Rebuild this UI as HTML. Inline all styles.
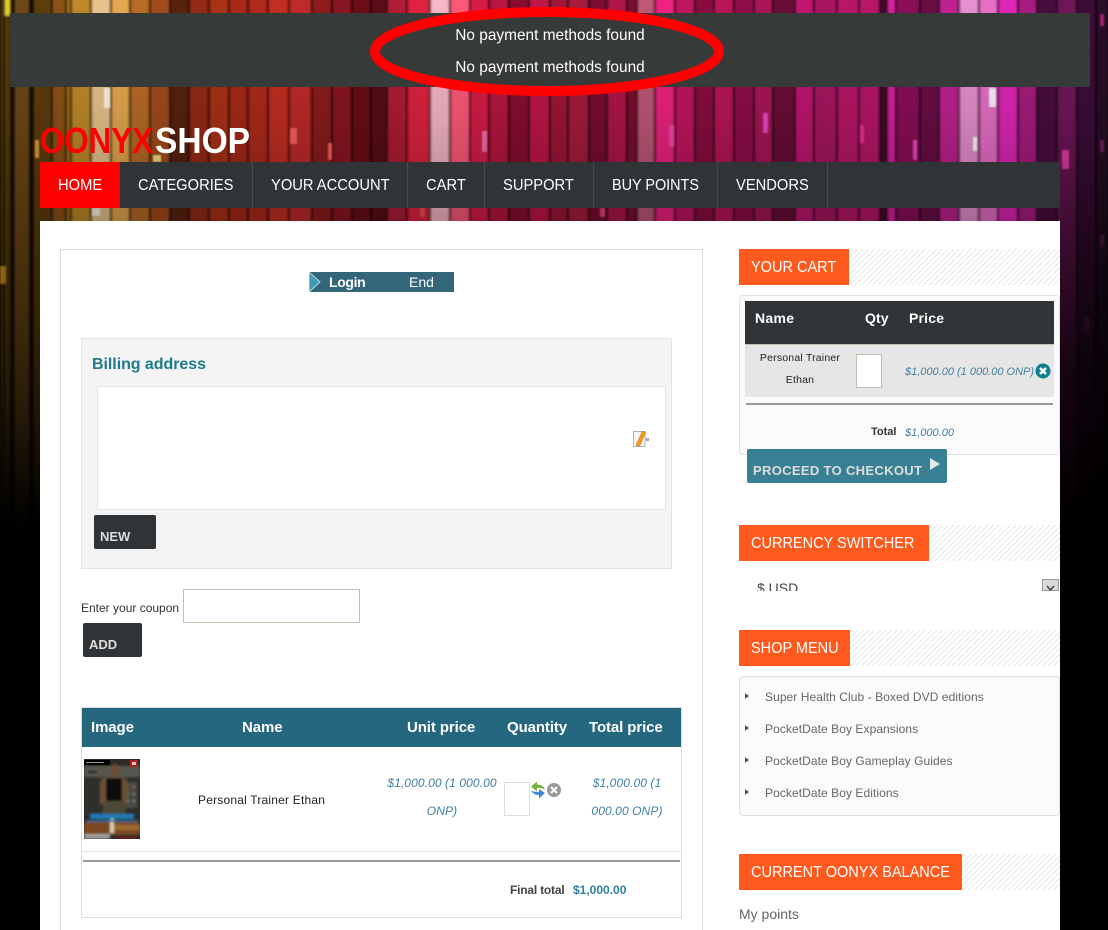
<!DOCTYPE html>
<html lang="en">
<head>
<meta charset="utf-8">
<title>Oonyx Shop</title>
<style>
html,body{margin:0;padding:0;width:1108px;height:930px;overflow:hidden;background:#000}
body{position:relative;font-family:"Liberation Sans",Arial,sans-serif}
div,a,span.t,svg.a,input{position:absolute}
.t{position:absolute;white-space:nowrap}
.bar{left:10px;top:13px;width:1080px;height:74px;background:#363a39}
.msg{left:10px;width:1080px;text-align:center;color:#fff;font-size:16px;line-height:20px;transform:scaleX(.964)}
.nav{left:40px;top:162px;width:1020px;height:46px;background:#303436}
.nt{top:162px;line-height:48px;font-size:16px;color:#fff;transform:scaleX(.92);transform-origin:0 50%}
.sep{top:162px;width:1px;height:46px;background:#474b4d}
.hatch{left:739px;width:321px;height:36px;background:repeating-linear-gradient(-45deg,#e8e8e8 0 1px,#fff 1px 4px)}
.hd{left:739px;height:36px;background:#ff5a1e;color:#fff;font-size:16px;line-height:37px;white-space:nowrap}
.hd span{left:12px;top:0;transform:scaleX(.907);transform-origin:0 50%}
.box{background:#fbfbfb;background-image:repeating-conic-gradient(#f8f8f8 0 25%,#fdfdfd 0 50%);background-size:4px 4px;border:1px solid #e0e0e0;border-radius:4px;box-sizing:border-box}
.btn{background:#303436;border-radius:2px;color:#ddd;font-weight:bold;font-size:13px;box-sizing:border-box}
.th{color:#fff;font-weight:bold;font-size:15px;line-height:20px;top:718px;letter-spacing:-.1px}
.price{color:#3f7f9f;font-style:italic;font-size:12px;line-height:28px;text-align:center;letter-spacing:.1px}
.mi{left:765px;font-size:12px;color:#666;line-height:16px;letter-spacing:.07px}
.bul{left:745px;width:0;height:0;border-left:4px solid #555;border-top:3px solid transparent;border-bottom:3px solid transparent}
</style>
</head>
<body>

<svg class="a" style="left:0;top:0" width="1108" height="560" viewBox="0 0 1108 560">
<defs>
<linearGradient id="fade" x1="0" y1="0" x2="0" y2="1">
<stop offset="0" stop-color="#000" stop-opacity="0"/>
<stop offset=".2" stop-color="#000" stop-opacity=".1"/>
<stop offset=".37" stop-color="#000" stop-opacity=".25"/>
<stop offset=".55" stop-color="#000" stop-opacity=".42"/>
<stop offset=".72" stop-color="#000" stop-opacity=".62"/>
<stop offset=".86" stop-color="#000" stop-opacity=".87"/>
<stop offset=".95" stop-color="#000" stop-opacity="1"/>
<stop offset="1" stop-color="#000" stop-opacity="1"/>
</linearGradient>
<linearGradient id="rf" x1="0" y1="0" x2="0" y2="1">
<stop offset="0" stop-color="#000" stop-opacity="0"/>
<stop offset="1" stop-color="#000" stop-opacity=".55"/>
</linearGradient>
<filter id="b" x="0" y="0" width="100%" height="100%"><feGaussianBlur stdDeviation="1"/></filter>
<filter id="b2" x="-50%" y="-50%" width="200%" height="200%"><feGaussianBlur stdDeviation=".7"/></filter>
</defs>
<g filter="url(#b)" stroke="#000" stroke-opacity=".6" stroke-width="2.2">
<rect x="0" y="-5" width="4" height="570" fill="#5e400e"/>
<rect x="4" y="-5" width="7" height="22" fill="#e8d030"/>
<rect x="4" y="17" width="7" height="550" fill="#5a3c0e"/>
<rect x="11" y="-5" width="3" height="570" fill="#2a1c06"/>
<rect x="14" y="-5" width="16" height="570" fill="#6e4a12"/>
<rect x="30" y="-5" width="3" height="570" fill="#1e1204"/>
<rect x="33" y="-5" width="19" height="570" fill="#5e3c0e"/>
<rect x="52" y="-5" width="14" height="570" fill="#8e5214"/>
<rect x="66" y="-5" width="5" height="570" fill="#a87420"/>
<rect x="71" y="-5" width="20" height="570" fill="#c08a2a"/>
<rect x="91" y="-5" width="20" height="570" fill="#e8c48c"/>
<rect x="111" y="-5" width="19" height="570" fill="#e6a850"/>
<rect x="130" y="-5" width="20" height="570" fill="#b86c28"/>
<rect x="150" y="-5" width="20" height="570" fill="#a44c1c"/>
<rect x="170" y="-5" width="19" height="570" fill="#5a2410"/>
<rect x="189" y="-5" width="20" height="570" fill="#962c14"/>
<rect x="209" y="-5" width="20" height="570" fill="#aa3018"/>
<rect x="229" y="-5" width="19" height="570" fill="#a82a18"/>
<rect x="248" y="-5" width="20" height="570" fill="#b02a1c"/>
<rect x="268" y="-5" width="21" height="570" fill="#c42e24"/>
<rect x="289" y="-5" width="23" height="570" fill="#c02c2a"/>
<rect x="312" y="-5" width="20" height="570" fill="#8e1c1c"/>
<rect x="332" y="-5" width="20" height="570" fill="#8a1820"/>
<rect x="352" y="-5" width="19" height="570" fill="#6a1018"/>
<rect x="371" y="-5" width="16" height="570" fill="#5a0c18"/>
<rect x="387" y="-5" width="20" height="570" fill="#b01c34"/>
<rect x="407" y="-5" width="23" height="570" fill="#e02040"/>
<rect x="430" y="-5" width="20" height="570" fill="#f8b8c8"/>
<rect x="450" y="-5" width="20" height="570" fill="#ff5a78"/>
<rect x="470" y="-5" width="19" height="570" fill="#d81c48"/>
<rect x="489" y="-5" width="20" height="570" fill="#b81440"/>
<rect x="509" y="-5" width="20" height="570" fill="#8a1030"/>
<rect x="529" y="-5" width="21" height="570" fill="#c01848"/>
<rect x="550" y="-5" width="18" height="570" fill="#a01838"/>
<rect x="568" y="-5" width="21" height="570" fill="#a81a3c"/>
<rect x="589" y="-5" width="18" height="570" fill="#7a1030"/>
<rect x="607" y="-5" width="20" height="570" fill="#b01848"/>
<rect x="627" y="-5" width="10" height="570" fill="#801030"/>
<rect x="637" y="-5" width="18" height="570" fill="#c05878"/>
<rect x="655" y="-5" width="20" height="570" fill="#f02080"/>
<rect x="675" y="-5" width="20" height="570" fill="#c01860"/>
<rect x="695" y="-5" width="19" height="570" fill="#8a1040"/>
<rect x="714" y="-5" width="20" height="570" fill="#b81858"/>
<rect x="734" y="-5" width="20" height="570" fill="#901048"/>
<rect x="754" y="-5" width="19" height="570" fill="#a81858"/>
<rect x="773" y="-5" width="22" height="570" fill="#6a0c38"/>
<rect x="795" y="-5" width="19" height="570" fill="#c01870"/>
<rect x="814" y="-5" width="23" height="570" fill="#a81460"/>
<rect x="837" y="-5" width="22" height="570" fill="#b81868"/>
<rect x="859" y="-5" width="21" height="570" fill="#b81868"/>
<rect x="880" y="-5" width="7" height="570" fill="#400a28"/>
<rect x="887" y="-5" width="9" height="570" fill="#d8209c"/>
<rect x="896" y="-5" width="24" height="570" fill="#8a1058"/>
<rect x="920" y="-5" width="19" height="570" fill="#6a0c44"/>
<rect x="939" y="-5" width="20" height="570" fill="#c02090"/>
<rect x="959" y="-5" width="20" height="570" fill="#e890d0"/>
<rect x="979" y="-5" width="19" height="570" fill="#e870c8"/>
<rect x="998" y="-5" width="20" height="570" fill="#e028b8"/>
<rect x="1018" y="-5" width="19" height="570" fill="#a81c80"/>
<rect x="1037" y="-5" width="20" height="570" fill="#4a0c3c"/>
<rect x="1057" y="-5" width="20" height="570" fill="#701858"/>
<rect x="1077" y="-5" width="19" height="570" fill="#3c1038"/>
<rect x="1096" y="-5" width="13" height="570" fill="#2a0a28"/>
</g>
<g filter="url(#b2)">
<rect x="104" y="88" width="6" height="20" fill="#fff8e8"/>
<rect x="989" y="88" width="7" height="19" fill="#fff0ff"/>
<rect x="763" y="113" width="5" height="20" fill="#e848c8"/>
<rect x="669" y="125" width="5" height="22" fill="#f048a8"/>
<rect x="482" y="131" width="5" height="21" fill="#f870b0"/>
<rect x="913" y="140" width="4" height="20" fill="#f048c8"/>
<rect x="973" y="137" width="4" height="14" fill="#fff"/>
<rect x="860" y="125" width="4" height="18" fill="#e83090"/>
<rect x="290" y="128" width="7" height="16" fill="#ff6060"/>
<rect x="328" y="143" width="4" height="17" fill="#ff6060"/>
<rect x="35" y="140" width="4" height="18" fill="#e0a030"/>
<rect x="153" y="155" width="8" height="7" fill="#f8e080"/>
<rect x="92" y="208" width="8" height="8" fill="#fff8e8"/>
<rect x="1062" y="150" width="7" height="19" fill="#f040b0"/>
<rect x="0" y="266" width="6" height="18" fill="#d89820"/>
<rect x="1084" y="317" width="6" height="17" fill="#601a58"/>
<rect x="1100" y="14" width="4" height="12" fill="#a02078"/>
<rect x="1100" y="140" width="4" height="12" fill="#702060"/>
<rect x="1100" y="235" width="4" height="12" fill="#602058"/>
<rect x="600" y="208" width="5" height="9" fill="#f04080"/>
<rect x="420" y="208" width="5" height="9" fill="#f05060"/>
</g>
<rect x="0" y="0" width="1108" height="560" fill="url(#fade)"/>
<rect x="1060" y="130" width="48" height="240" fill="url(#rf)"/>
<rect x="1060" y="370" width="48" height="190" fill="#000" fill-opacity=".55"/>
</svg>

<div class="bar"></div>
<div class="msg" style="top:26px">No payment methods found</div>
<div class="msg" style="top:58px">No payment methods found</div>
<svg class="a" style="left:360px;top:0" width="380" height="105" viewBox="360 0 380 105">
<ellipse cx="547" cy="51.5" rx="172" ry="39.5" fill="none" stroke="#f00" stroke-width="10"/>
</svg>

<svg class="a" style="left:40px;top:122px" width="215" height="36" viewBox="40 122 215 36">
<text x="40" y="153" font-family="Liberation Sans" font-weight="bold" font-size="36" fill="#f00" textLength="113" lengthAdjust="spacingAndGlyphs">OONYX</text>
<text x="155" y="153" font-family="Liberation Sans" font-weight="bold" font-size="36" fill="#fff" textLength="95" lengthAdjust="spacingAndGlyphs">SHOP</text>
</svg>

<div class="nav"></div>
<div style="left:40px;top:162px;width:80px;height:46px;background:#f00"></div>
<div class="sep" style="left:252px"></div>
<div class="sep" style="left:407px"></div>
<div class="sep" style="left:484px"></div>
<div class="sep" style="left:593px"></div>
<div class="sep" style="left:717px"></div>
<div class="sep" style="left:827px"></div>
<span class="t nt" style="left:58px">HOME</span>
<span class="t nt" style="left:138px">CATEGORIES</span>
<span class="t nt" style="left:271px">YOUR ACCOUNT</span>
<span class="t nt" style="left:426px">CART</span>
<span class="t nt" style="left:503px">SUPPORT</span>
<span class="t nt" style="left:612px;transform:scaleX(.9)">BUY POINTS</span>
<span class="t nt" style="left:736px">VENDORS</span>

<div style="left:40px;top:221px;width:1020px;height:709px;background:#fff"></div>

<div style="left:60px;top:249px;width:643px;height:700px;border:1px solid #ddd;box-sizing:border-box"></div>

<div style="left:309px;top:272px;width:145px;height:20px;background:#336678"></div>
<svg class="a" style="left:309px;top:272px" width="14" height="20" viewBox="0 0 14 20"><path d="M0 0L11 10L0 20Z" fill="#3f9ab8" stroke="#b8dce8" stroke-width="1"/></svg>
<span class="t" style="left:329px;top:272px;line-height:21px;font-size:14px;font-weight:bold;color:#fff;letter-spacing:-.35px">Login</span>
<span class="t" style="left:409px;top:272px;line-height:21px;font-size:14px;color:#fff">End</span>

<div style="left:81px;top:338px;width:591px;height:231px;background:#f4f4f4;border:1px solid #e5e5e5;box-sizing:border-box"></div>
<span class="t" style="left:92px;top:355px;line-height:20px;font-size:16px;font-weight:bold;color:#1f7a8c;letter-spacing:-.05px">Billing address</span>
<div style="left:97px;top:386px;width:569px;height:124px;background:#fff;border:1px solid #e5e5e5;box-sizing:border-box"></div>
<svg class="a" style="left:632px;top:430px" width="18" height="18" viewBox="0 0 18 18">
<path d="M1.500 1.500H13V16.500H1.500Z" fill="#f4f6fb" stroke="#a8b0c8"/>
<path d="M4.500 14L10.500 1L13.500 2.500L8 15.500L4.500 16Z" fill="#f29a10" stroke="#d86a00" stroke-width=".5"/>
<circle cx="15.500" cy="9.500" r="1.900" fill="#aab"/>
</svg>
<div class="btn" style="left:94px;top:515px;width:62px;height:34px;padding:14px 0 0 6px;line-height:15px">NEW</div>

<span class="t" style="left:81px;top:600px;line-height:16px;font-size:12px;color:#333">Enter your coupon</span>
<div style="left:183px;top:589px;width:177px;height:34px;background:#fff;border:1px solid #c4bfae;box-sizing:border-box"></div>
<div class="btn" style="left:83px;top:623px;width:59px;height:34px;padding:14px 0 0 6px;line-height:15px">ADD</div>

<div style="left:81px;top:707px;width:601px;height:211px;border:1px solid #ddd;box-sizing:border-box;background:#fff"></div>
<div style="left:82px;top:708px;width:599px;height:39px;background:#25677f"></div>
<span class="t th" style="left:91px">Image</span>
<span class="t th" style="left:242px">Name</span>
<span class="t th" style="left:407px">Unit price</span>
<span class="t th" style="left:507px">Quantity</span>
<span class="t th" style="left:589px">Total price</span>

<svg class="a" style="left:84px;top:759px" width="56" height="80" viewBox="0 0 56 80">
<defs><filter id="s" x="-10%" y="-10%" width="120%" height="120%"><feGaussianBlur stdDeviation="1"/></filter></defs>
<rect width="56" height="80" fill="#2c2b28"/>
<g filter="url(#s)">
<rect x="0" y="7" width="56" height="11" fill="#57564f"/>
<rect x="4" y="12" width="9" height="2" fill="#111"/>
<rect x="0" y="18" width="56" height="38" fill="#2e2d2a"/>
<rect x="41" y="23" width="12" height="26" fill="#4a4a44"/>
<circle cx="44" cy="28" r="1" fill="#999"/><circle cx="50" cy="28" r="1" fill="#999"/>
<circle cx="44" cy="35" r="1" fill="#999"/><circle cx="50" cy="35" r="1" fill="#999"/>
<circle cx="44" cy="42" r="1" fill="#999"/><circle cx="50" cy="42" r="1" fill="#999"/>
<rect x="0" y="63" width="56" height="13" fill="#7a4a20"/>
<rect x="30" y="66" width="26" height="5" fill="#a06a30"/>
<ellipse cx="31" cy="11" rx="4.500" ry="6" fill="#6e4c36"/>
<path d="M16 24Q18 18 24 18H38Q44 19 45 28L43 46L38 44L38 30H24L23 47L16 45Z" fill="#6a5038"/>
<rect x="22" y="19" width="16" height="24" fill="#0c0c0e"/>
<path d="M20 42H40L43 60H18Z" fill="#4c4a34"/>
<rect x="26" y="60" width="4" height="14" fill="#d8d0b0"/>
<rect x="6" y="55" width="44" height="5" fill="#1a7ab8"/>
<rect x="2" y="61" width="52" height="2" fill="#2a6a90"/>
<rect x="0" y="75" width="26" height="5" fill="#b8b8b8" opacity=".8"/>
<rect x="33" y="78" width="18" height="2" fill="#8a1010"/>
</g>
<rect x="0" y="1" width="26" height="5" fill="#000"/>
<rect x="2" y="3" width="18" height="1" fill="#999"/>
<rect x="46" y="1" width="8" height="7" fill="#a82020"/>
<rect x="48" y="3" width="4" height="3" fill="#e8c8c8"/>
</svg>
<span class="t" style="left:198px;top:792px;line-height:16px;font-size:12px;color:#222;letter-spacing:.2px">Personal Trainer Ethan</span>
<div class="price" style="left:384px;top:769px;width:116px">$1,000.00 (1 000.00<br>ONP)</div>
<div style="left:504px;top:782px;width:26px;height:34px;background:#fff;border:1px solid #ddd;box-sizing:border-box"></div>
<svg class="a" style="left:530px;top:781px" width="16" height="18" viewBox="0 0 16 18">
<path d="M1 5.500L7 .5V3.500Q13 3.500 15 8.500Q11 6.500 7 7V10.500Z" fill="#7ab040"/>
<path d="M15 12L9 17.500V14Q3.500 14 1 9.500Q5 11.500 9 11V8Z" fill="#3a8ad0"/>
</svg>
<svg class="a" style="left:546px;top:782px" width="16" height="16" viewBox="0 0 16 16">
<circle cx="8" cy="8" r="7" fill="#989898"/>
<path d="M5 5L11 11M11 5L5 11" stroke="#fff" stroke-width="2.200"/>
</svg>
<div class="price" style="left:584px;top:769px;width:86px">$1,000.00 (1<br>000.00 ONP)</div>

<div style="left:82px;top:851px;width:599px;height:1px;background:#e5e5e5"></div>
<div style="left:83px;top:860px;width:597px;height:2px;background:#9a9a94"></div>
<span class="t" style="left:510px;top:882px;line-height:16px;font-size:12px;font-weight:bold;color:#444;letter-spacing:-.2px">Final total</span>
<span class="t" style="left:573px;top:882px;line-height:16px;font-size:12px;font-weight:bold;color:#2f7f9f">$1,000.00</span>

<div class="hatch" style="top:249px"></div>
<div class="hd" style="top:249px;width:110px"><span class="t">YOUR CART</span></div>
<div class="box" style="left:739px;top:295px;width:321px;height:160px"></div>
<div style="left:745px;top:301px;width:309px;height:43px;background:#303436"></div>
<span class="t" style="left:755px;top:308px;line-height:20px;font-size:14px;font-weight:bold;color:#fff;letter-spacing:.3px">Name</span>
<span class="t" style="left:865px;top:308px;line-height:20px;font-size:14px;font-weight:bold;color:#fff;letter-spacing:.1px">Qty</span>
<span class="t" style="left:909px;top:308px;line-height:20px;font-size:14px;font-weight:bold;color:#fff;letter-spacing:.2px">Price</span>
<div style="left:745px;top:344px;width:309px;height:53px;background:#e6e6e6;border-top:1px solid #c8c0b0;box-sizing:border-box"></div>
<div style="left:745px;top:347px;width:110px;text-align:center;font-size:10.500px;line-height:22px;color:#222;letter-spacing:.2px">Personal Trainer<br>Ethan</div>
<div style="left:856px;top:354px;width:26px;height:34px;background:#fff;border:1px solid #c4bfae;box-sizing:border-box"></div>
<span class="t" style="left:905px;top:364px;line-height:16px;font-size:11px;font-style:italic;color:#4080a0">$1,000.00 (1 000.00 ONP)</span>
<svg class="a" style="left:1035px;top:363px" width="16" height="16" viewBox="0 0 16 16">
<circle cx="8" cy="8" r="7.500" fill="#0f7f90"/>
<path d="M5 5L11 11M11 5L5 11" stroke="#fff" stroke-width="2.500"/>
</svg>
<div style="left:746px;top:403px;width:307px;height:2px;background:#9a9a94"></div>
<span class="t" style="left:871px;top:424px;line-height:16px;font-size:11px;font-weight:bold;color:#333">Total</span>
<span class="t" style="left:905px;top:425px;line-height:16px;font-size:11px;font-style:italic;color:#4080a0">$1,000.00</span>
<div class="btn" style="left:747px;top:449px;width:200px;height:34px;background:#3a8094;padding:14px 0 0 6px;line-height:15px;white-space:nowrap;letter-spacing:.33px">PROCEED TO CHECKOUT</div>
<svg class="a" style="left:929px;top:457px" width="12" height="14" viewBox="0 0 12 14"><path d="M1 1L11 7L1 13Z" fill="#dfe9ec"/></svg>

<div class="hatch" style="top:525px"></div>
<div class="hd" style="top:525px;width:190px"><span class="t">CURRENCY SWITCHER</span></div>
<div style="left:739px;top:579px;width:321px;height:12px;overflow:hidden;background:#fff">
<span class="t" style="left:18px;top:0;line-height:18px;font-size:14px;color:#444">$ USD</span>
<div style="left:303px;top:0;width:17px;height:12px;background:#d8d8d8;border:1px solid #999;box-sizing:border-box"></div>
<svg class="a" style="left:307px;top:4px" width="9" height="8" viewBox="0 0 9 8"><path d="M1 3L4.500 7L8 3" fill="none" stroke="#444" stroke-width="1.500"/></svg>
</div>

<div class="hatch" style="top:630px"></div>
<div class="hd" style="top:630px;width:111px"><span class="t">SHOP MENU</span></div>
<div class="box" style="left:739px;top:676px;width:321px;height:140px"></div>
<div class="bul" style="top:693px"></div>
<div class="bul" style="top:725px"></div>
<div class="bul" style="top:757px"></div>
<div class="bul" style="top:789px"></div>
<span class="t mi" style="top:689px">Super Health Club - Boxed DVD editions</span>
<span class="t mi" style="top:721px">PocketDate Boy Expansions</span>
<span class="t mi" style="top:753px">PocketDate Boy Gameplay Guides</span>
<span class="t mi" style="top:785px">PocketDate Boy Editions</span>

<div class="hatch" style="top:854px"></div>
<div class="hd" style="top:854px;width:223px"><span class="t">CURRENT OONYX BALANCE</span></div>
<span class="t" style="left:739px;top:906px;line-height:16px;font-size:14px;color:#666">My points</span>

</body>
</html>
